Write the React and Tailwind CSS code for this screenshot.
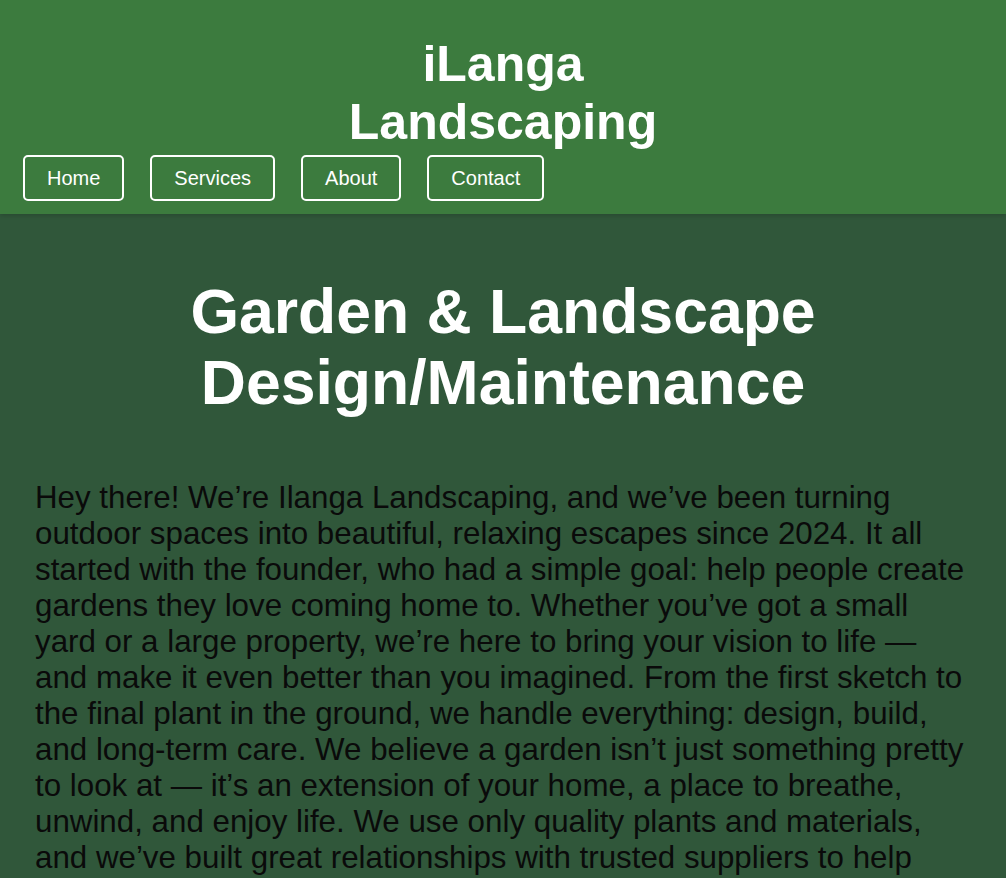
export default function App() {
  const links = ["Home", "Services", "About", "Contact"];
  return (
    <div className="min-h-[878px] bg-[#30573a] font-['Liberation_Sans',Arial,sans-serif]">
      <header className="bg-[#3c7b3e] pt-[36px] pb-[13px] px-[23px] shadow-[0_2px_4px_rgba(0,0,0,0.15)]">
        <h1 className="mx-auto w-[340px] text-center text-[50px] font-bold leading-[57.5px] text-white">
          iLanga Landscaping
        </h1>
        <nav className="mt-[4px] flex gap-[26px]">
          {links.map((l) => (
            <a
              key={l}
              href="#"
              className="flex h-[46px] items-center rounded-[5px] border-2 border-white px-[22px] text-[20px] text-white"
            >
              {l}
            </a>
          ))}
        </nav>
      </header>
      <main className="px-[35px] pt-[62px]">
        <h2 className="mx-auto max-w-[700px] text-center text-[62.5px] font-bold leading-[71px] text-white">
          Garden &amp; Landscape Design/Maintenance
        </h2>
        <p className="mt-[62px] text-[31.3px] leading-[36px] text-[#0a0a0a]">
          Hey there! We’re Ilanga Landscaping, and we’ve been turning outdoor spaces into beautiful, relaxing escapes since 2024. It all started with the founder, who had a simple goal: help people create gardens they love coming home to. Whether you’ve got a small yard or a large property, we’re here to bring your vision to life — and make it even better than you imagined. From the first sketch to the final plant in the ground, we handle everything: design, build, and long-term care. We believe a garden isn’t just something pretty to look at — it’s an extension of your home, a place to breathe, unwind, and enjoy life. We use only quality plants and materials, and we’ve built great relationships with trusted suppliers to help make every project a success.
        </p>
      </main>
    </div>
  );
}
